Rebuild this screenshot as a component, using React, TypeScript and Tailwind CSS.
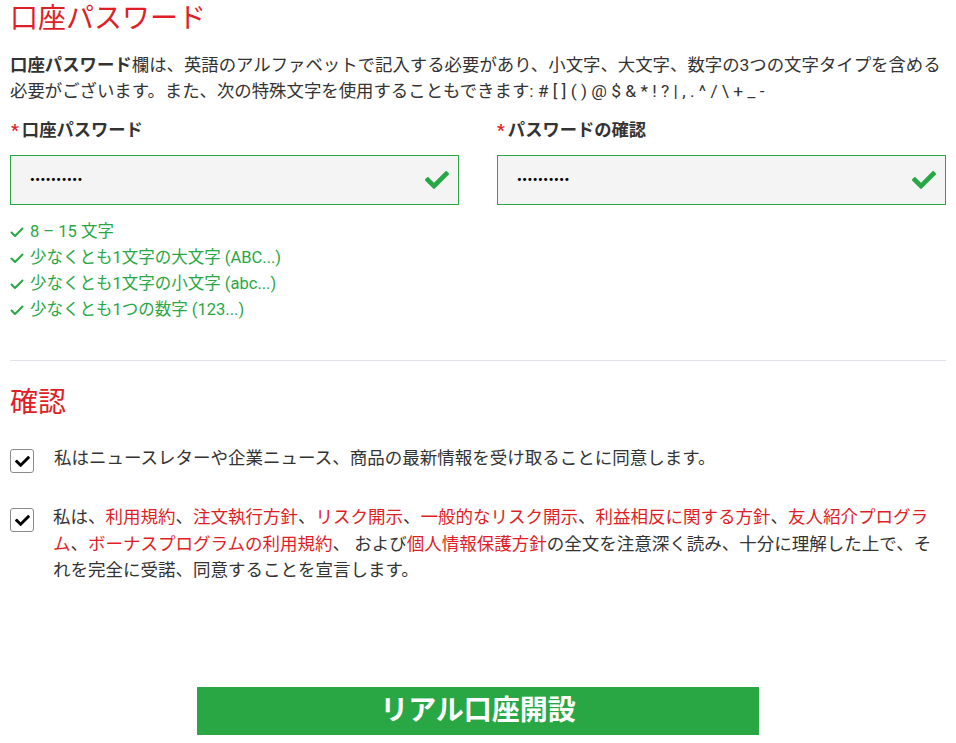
import React from "react";
import { FaCheck } from "react-icons/fa";

const font = { fontFamily: 'Roboto, "Noto Sans CJK JP", sans-serif' };

function ListCheck() {
  return (
    <svg width="14" height="12" viewBox="0 0 14 12" className="shrink-0">
      <polyline points="1.5,6.5 5,10 12.5,2.5" fill="none" stroke="#28a745" strokeWidth="2" strokeLinecap="round" strokeLinejoin="round" />
    </svg>
  );
}

function Box() {
  return (
    <div className="w-6 h-6 shrink-0 rounded-[3px] border border-[#8a8a8a] bg-white flex items-center justify-center">
      <FaCheck className="text-black text-[15px]" />
    </div>
  );
}

function R({ children }: { children: React.ReactNode }) {
  return <span className="text-[#e01e26]">{children}</span>;
}

function PwInput() {
  return (
    <div className="mt-[12px] h-[50px] border border-[#28a745] bg-[#f4f4f4] flex items-center justify-between pl-[19px] pr-[9px]">
      <span className="text-[13px] tracking-[0.6px] text-black font-bold">••••••••••</span>
      <FaCheck className="text-[#28a745] text-[24px]" />
    </div>
  );
}

export default function App() {
  const checks = [
    "8 – 15 文字",
    "少なくとも1文字の大文字 (ABC...)",
    "少なくとも1文字の小文字 (abc...)",
    "少なくとも1つの数字 (123...)",
  ];
  return (
    <div className="bg-white min-h-[743px] px-[10px] text-[#333]" style={font}>
      <h1 className="text-[28px] leading-[36px] text-[#e01e26] pt-[1px]">口座パスワード</h1>
      <p className="mt-[15px] text-[17.4px] leading-[26px]">
        <b>口座パスワード</b>欄は、英語のアルファベットで記入する必要があり、小文字、大文字、数字の3つの文字タイプを含める必要がございます。また、次の特殊文字を使用することもできます: # [ ] ( ) @ $ &amp; * ! ? | , . ^ / \ + _ -
      </p>
      <div className="mt-[13px] grid grid-cols-2 gap-[38px]">
        <div>
          <div className="text-[17.3px] leading-[26px] font-bold pl-[1px]">
            <span className="text-[#e01e26] mr-[3px]">*</span>口座パスワード
          </div>
          <PwInput />
        </div>
        <div>
          <div className="text-[17.3px] leading-[26px] font-bold">
            <span className="text-[#e01e26] mr-[3px]">*</span>パスワードの確認
          </div>
          <PwInput />
        </div>
      </div>
      <ul className="mt-[14px]">
        {checks.map((c) => (
          <li key={c} className="flex items-center gap-[6px] text-[16.5px] leading-[26px] text-[#28a745]">
            <ListCheck />
            <span>{c}</span>
          </li>
        ))}
      </ul>
      <hr className="mt-[37px] border-t border-[#e2e2e8]" />
      <h2 className="mt-[24px] text-[28px] leading-[36px] text-[#e01e26]">確認</h2>
      <div className="mt-[24px] flex gap-[20px]">
        <div className="mt-[4px]"><Box /></div>
        <p className="text-[17.5px] leading-[26px]">私はニュースレターや企業ニュース、商品の最新情報を受け取ることに同意します。</p>
      </div>
      <div className="mt-[31px] flex gap-[19px]">
        <div className="mt-[4px]"><Box /></div>
        <p className="w-[885px] text-[17.5px] leading-[26.5px]">
          私は、<R>利用規約</R>、<R>注文執行方針</R>、<R>リスク開示</R>、<R>一般的なリスク開示</R>、<R>利益相反に関する方針</R>、<R>友人紹介プログラム</R>、<R>ボーナスプログラムの利用規約</R>、 および<R>個人情報保護方針</R>の全文を注意深く読み、十分に理解した上で、それを完全に受諾、同意することを宣言します。
        </p>
      </div>
      <div className="mt-[103px] flex justify-center">
        <button className="w-[562px] h-[48px] bg-[#29a745] text-white text-[28px] font-bold leading-none">リアル口座開設</button>
      </div>
    </div>
  );
}
